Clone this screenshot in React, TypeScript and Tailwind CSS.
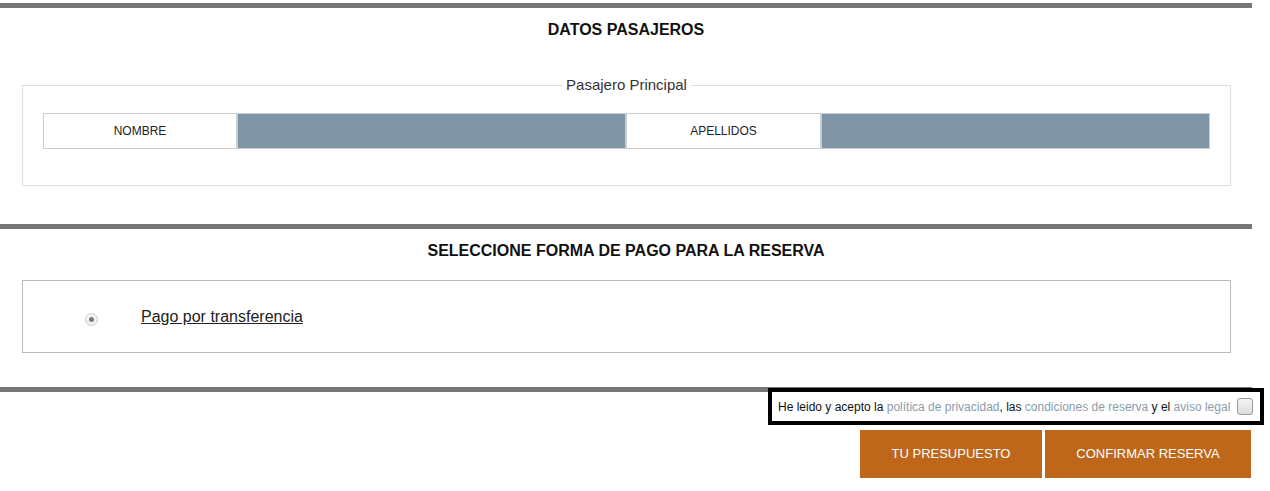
const font = "font-['Liberation_Sans',Arial,sans-serif]";

function Bar() {
  return <div className="h-[5px] bg-[#777777]" />;
}

function Heading({ children }: { children: string }) {
  return (
    <h2 className="mt-[12px] text-center text-[16px] leading-[20px] font-bold text-[#111]">
      {children}
    </h2>
  );
}

const fields = ["NOMBRE", "APELLIDOS"];

export default function App() {
  return (
    <div className={`${font} w-[1252px] pt-[3px] bg-white text-[#222]`}>
      <Bar />
      <Heading>DATOS PASAJEROS</Heading>

      <fieldset className="mt-[37px] ml-[22px] w-[1209px] border border-[#dddddd] px-[20px] pt-[20px] pb-[36px]">
        <legend className="mx-auto px-[4px] text-[15px] leading-[16px] text-[#333]">
          Pasajero Principal
        </legend>
        <div className="grid grid-cols-[194px_389px_195px_389px] h-[36px]">
          {fields.map((f) => (
            <div key={f} className="contents">
              <div className="flex items-center justify-center border border-[#cccccc] bg-white text-[12px] text-[#222]">
                {f}
              </div>
              <div className="border border-[#c8ced3] bg-[#7f94a5]" />
            </div>
          ))}
        </div>
      </fieldset>

      <div className="mt-[38px]">
        <Bar />
      </div>
      <Heading>SELECCIONE FORMA DE PAGO PARA LA RESERVA</Heading>

      <div className="mt-[19px] ml-[22px] w-[1209px] h-[73px] border border-[#bbbbbb] flex items-center">
        <span className="ml-[62px] mt-[6px] w-[13px] h-[13px] rounded-full border border-[#cfcfcf] bg-[#f2f2f2] flex items-center justify-center">
          <span className="w-[5px] h-[5px] rounded-full bg-[#7a7a7a]" />
        </span>
        <a className="ml-[43px] text-[16px] leading-[18px] underline text-[#222] cursor-pointer">
          Pago por transferencia
        </a>
      </div>

      <div className="mt-[34px]">
        <Bar />
      </div>

      <div className="flex justify-end -mt-[4px] -mr-[12px]">
        <label className="flex items-center h-[37px] w-[496px] border-[4px] border-black pl-[6px] pr-[7px] text-[12px] text-[#111]">
          <span className="whitespace-nowrap">
            He leido y acepto la{" "}
            <a className="text-[#8a9bae]">política de privacidad</a>, las{" "}
            <a className="text-[#8a9bae]">condiciones de reserva</a> y el{" "}
            <a className="text-[#8a9bae]">aviso legal</a>
          </span>
          <span className="ml-auto w-[16px] h-[17px] rounded-[3px] border border-[#9a9a9a] bg-gradient-to-b from-[#f4f4f4] to-[#dcdcdc]" />
        </label>
      </div>

      <div className="flex justify-end gap-[3px] mt-[5px] mr-[1px]">
        <button className="w-[182px] h-[48px] bg-[#be661a] text-white text-[13px]">TU PRESUPUESTO</button>
        <button className="w-[206px] h-[48px] bg-[#be661a] text-white text-[13px]">CONFIRMAR RESERVA</button>
      </div>
    </div>
  );
}
